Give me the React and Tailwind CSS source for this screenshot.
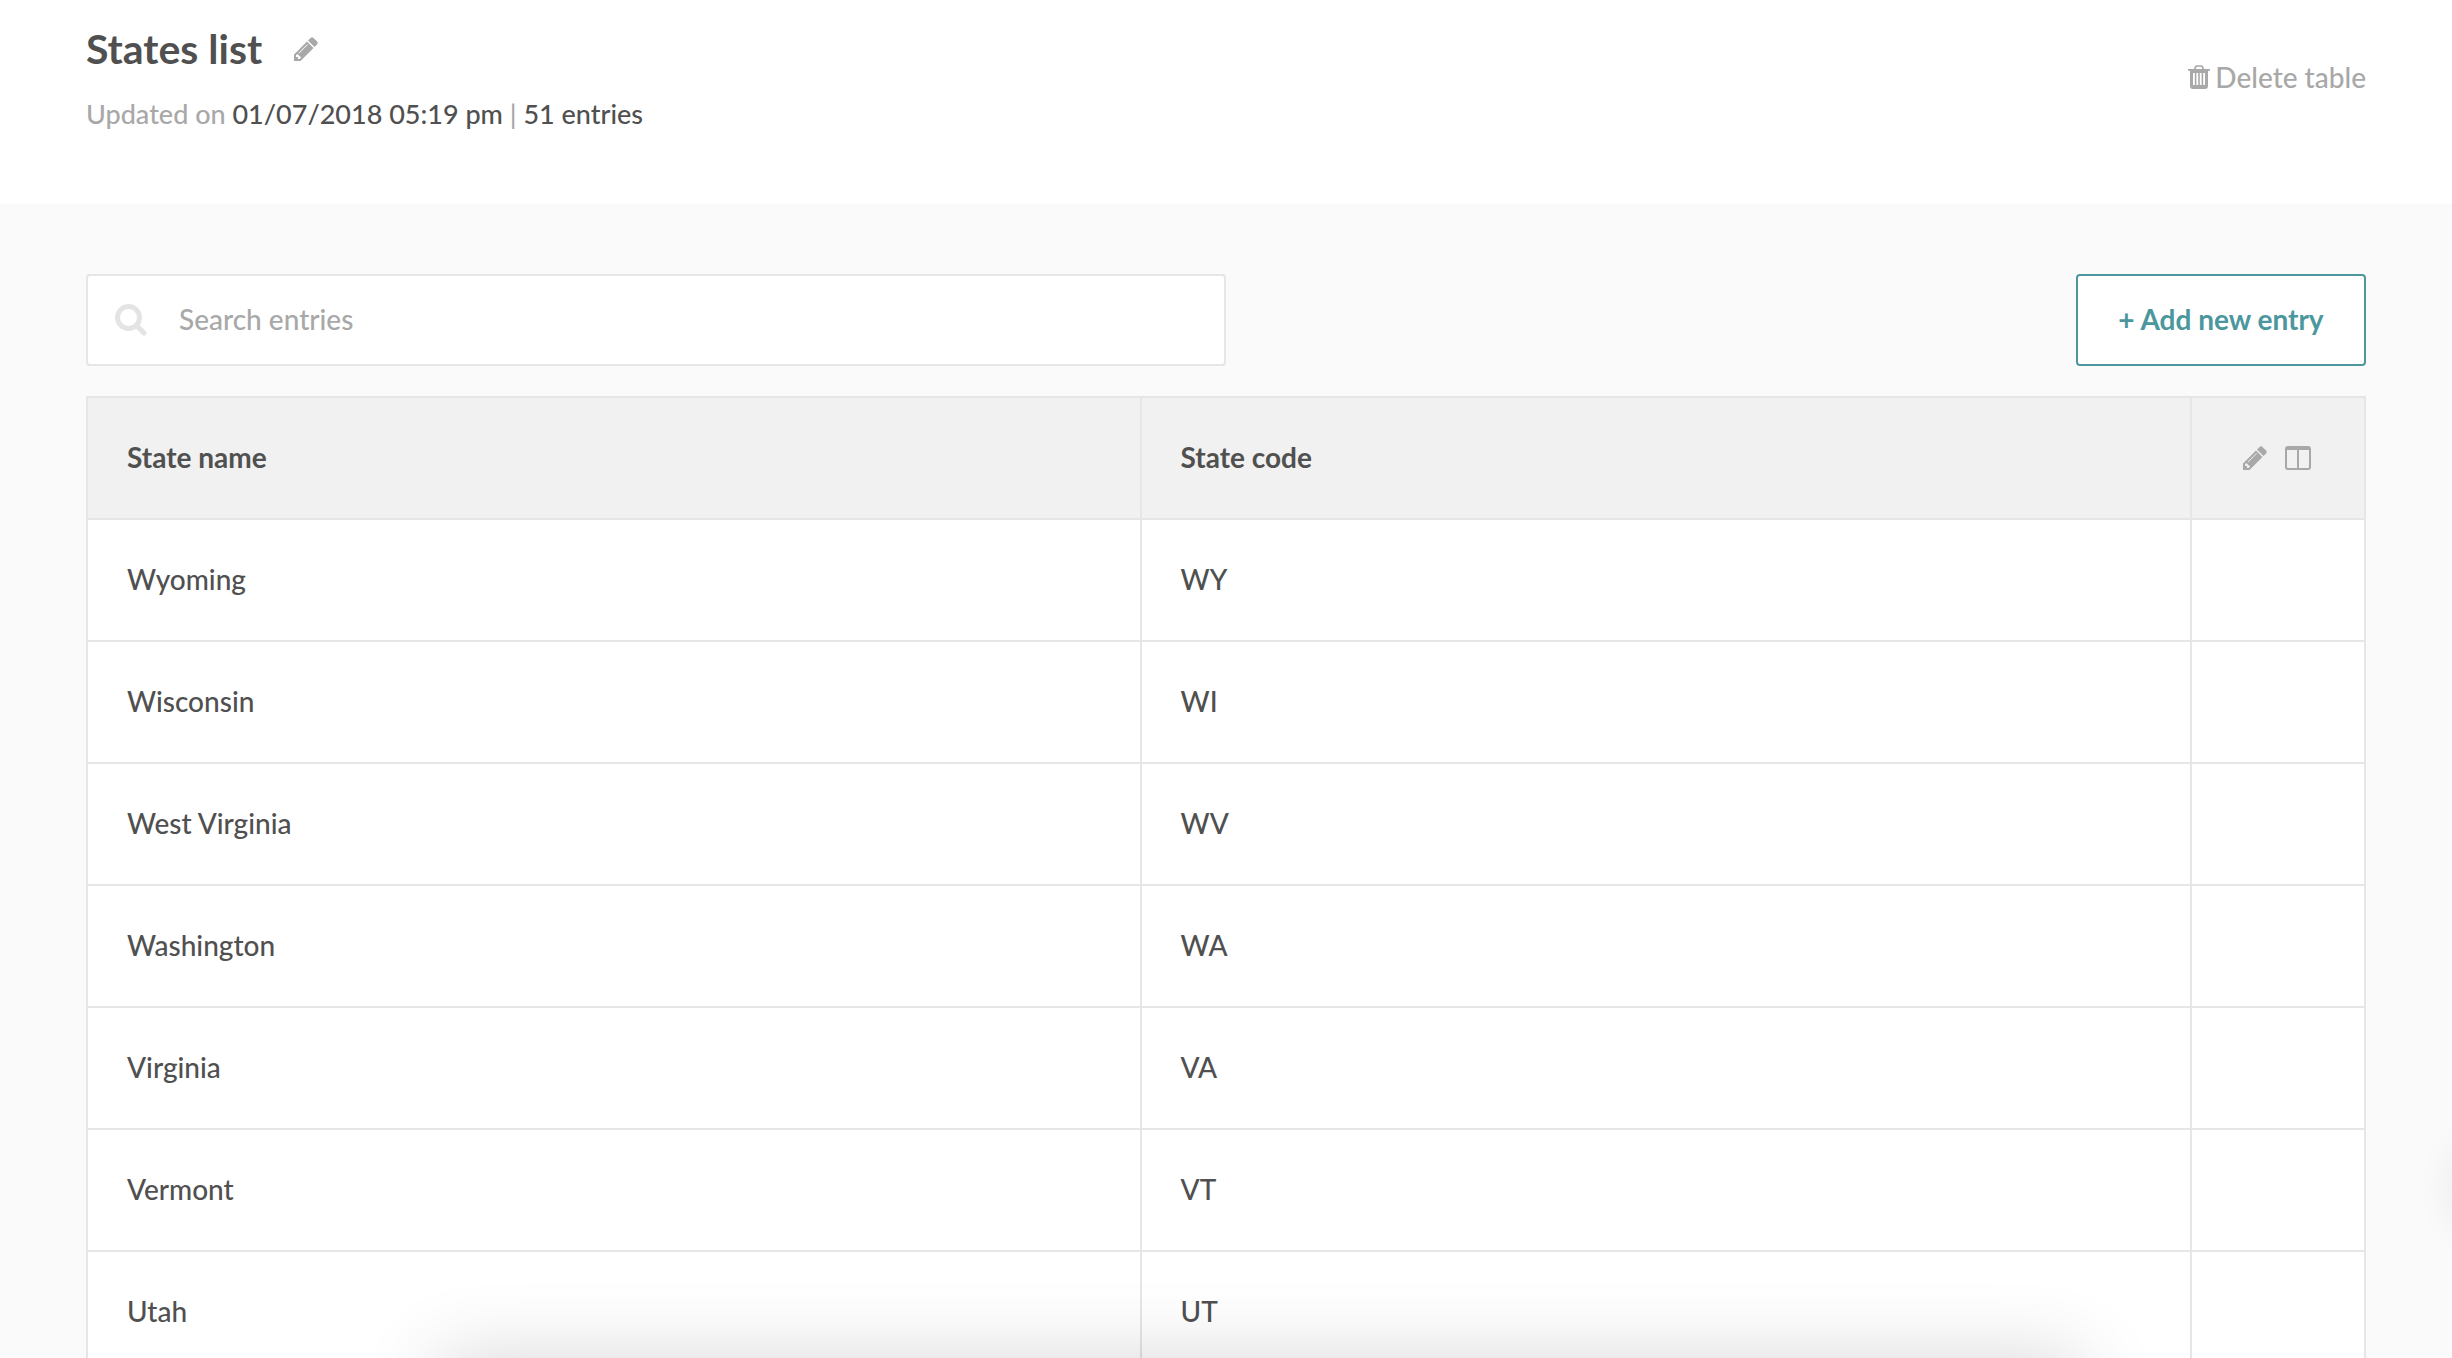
import React from "react";

const states = [
  ["Wyoming", "WY"],
  ["Wisconsin", "WI"],
  ["West Virginia", "WV"],
  ["Washington", "WA"],
  ["Virginia", "VA"],
  ["Vermont", "VT"],
  ["Utah", "UT"],
];

function PencilIcon({ className }) {
  return (
    <svg viewBox="128 128 1536 1536" fill="currentColor" className={className} aria-hidden="true">
      <path d="M491 1536l91-91-235-235-91 91v107h128v128h107zm523-928q0-22-22-22-10 0-17 7l-542 542q-7 7-7 17 0 22 22 22 10 0 17-7l542-542q7-7 7-17zm-54-192l416 416-832 832h-416v-416zm683 96q0 53-37 90l-166 166-416-416 166-165q36-38 90-38 53 0 91 38l235 234q37 39 37 91z" />
    </svg>
  );
}

function TrashIcon({ className }) {
  return (
    <svg viewBox="0 0 22 24" className={className} aria-hidden="true">
      <path d="M6.500 4.500L7.500 2q.5-1 1.500-1h4q1 0 1.500 1l1 2.500" fill="none" stroke="currentColor" strokeWidth="1.700" />
      <path d="M0 4h22v1.800H0z" fill="currentColor" />
      <path
        fillRule="evenodd"
        fill="currentColor"
        d="M2 5h18v16q0 3-3 3H5q-3 0-3-3zM5 8v12h1.800V8zM8.400 8v12h1.800V8zM11.800 8v12h1.800V8zM15.200 8v12h1.800V8z"
      />
    </svg>
  );
}

function ColumnsIcon({ className }) {
  return (
    <svg viewBox="0 0 26 24" className={className} aria-hidden="true">
      <rect x="1" y="1" width="24" height="22" rx="2" fill="none" stroke="currentColor" strokeWidth="2" />
      <path d="M1 1h24v3H1zM12 3h2v20h-2z" fill="currentColor" />
    </svg>
  );
}

function SearchIcon({ className }) {
  return (
    <svg viewBox="0 0 32 32" fill="none" stroke="currentColor" className={className} aria-hidden="true">
      <circle cx="13.500" cy="13.500" r="11" strokeWidth="5" />
      <path d="M22 22l7 7" strokeWidth="5" strokeLinecap="round" />
    </svg>
  );
}

export default function App() {
  return (
    <div className="relative h-screen overflow-hidden bg-[#fafafa] font-['Lato',sans-serif] text-[28px] leading-10 font-medium text-[#505050]">
      <header className="flex h-[204px] items-start justify-between bg-white px-[86px] pt-6">
        <div>
          <div className="flex items-center gap-8">
            <h1 className="text-[41px] leading-[50px] font-bold">States list</h1>
            <button type="button" aria-label="Rename table" className="text-[#a8a8a8]">
              <PencilIcon className="size-6" />
            </button>
          </div>
          <p className="mt-5 text-[27px]">
            <span className="text-[#a8a8a8]">Updated on</span> 01/07/2018 05:19 pm{" "}
            <span className="text-[#a8a8a8]">|</span> 51 entries
          </p>
        </div>
        <button type="button" className="mt-[33px] flex items-center gap-[5px] text-[#a8a8a8]">
          <TrashIcon className="h-6 w-[22px]" />
          Delete table
        </button>
      </header>

      <main className="px-[86px] pt-[70px]">
        <div className="flex items-stretch justify-between">
          <div className="flex h-[92px] w-1/2 items-center gap-8 rounded border-2 border-[#e6e6e6] bg-white pl-[27px]">
            <SearchIcon className="size-8 text-[#e4e4e4]" />
            <input
              type="search"
              aria-label="Search entries"
              placeholder="Search entries"
              className="h-full flex-1 pb-0.5 outline-none placeholder:text-[#a8a8a8]"
            />
          </div>
          <button type="button" className="w-[290px] rounded border-2 border-[#4c979d] bg-white pb-0.5 font-bold text-[#4c979d]">
            + Add new entry
          </button>
        </div>

        <table className="mt-[30px] w-full table-fixed border-collapse bg-white text-left">
          <colgroup>
            <col className="w-[46.25%]" />
            <col />
            <col className="w-[174px]" />
          </colgroup>
          <thead className="bg-[#f1f1f1]">
            <tr className="h-[122px]">
              <th scope="col" className="border-2 border-[#e6e6e6] px-[39px] pb-0.5 font-bold">State name</th>
              <th scope="col" className="border-2 border-[#e6e6e6] px-[39px] pb-0.5 font-bold">State code</th>
              <th scope="col" className="border-2 border-[#e6e6e6] pr-0.5">
                <div className="flex items-center justify-center gap-[18px] text-[#a8a8a8]">
                  <button type="button" aria-label="Edit columns">
                    <PencilIcon className="size-6" />
                  </button>
                  <button type="button" aria-label="Column layout">
                    <ColumnsIcon className="h-6 w-[26px]" />
                  </button>
                </div>
              </th>
            </tr>
          </thead>
          <tbody>
            {states.map(([name, code]) => (
              <tr key={code} className="h-[122px]">
                <td className="border-2 border-[#e6e6e6] px-[39px] pb-0.5">{name}</td>
                <td className="border-2 border-[#e6e6e6] px-[39px] pb-0.5">{code}</td>
                <td className="border-2 border-[#e6e6e6]" />
              </tr>
            ))}
          </tbody>
        </table>
      </main>

      {/* Soft shadows cast by panels resting just outside the viewport */}
      <div className="pointer-events-none absolute top-full right-[371px] left-[437px] h-40 shadow-[0_0_80px_rgba(0,0,0,0.16)]" />
      <div className="pointer-events-none absolute top-[1140px] left-full h-24 w-24 rounded-full shadow-[0_0_40px_rgba(0,0,0,0.08)]" />
    </div>
  );
}
